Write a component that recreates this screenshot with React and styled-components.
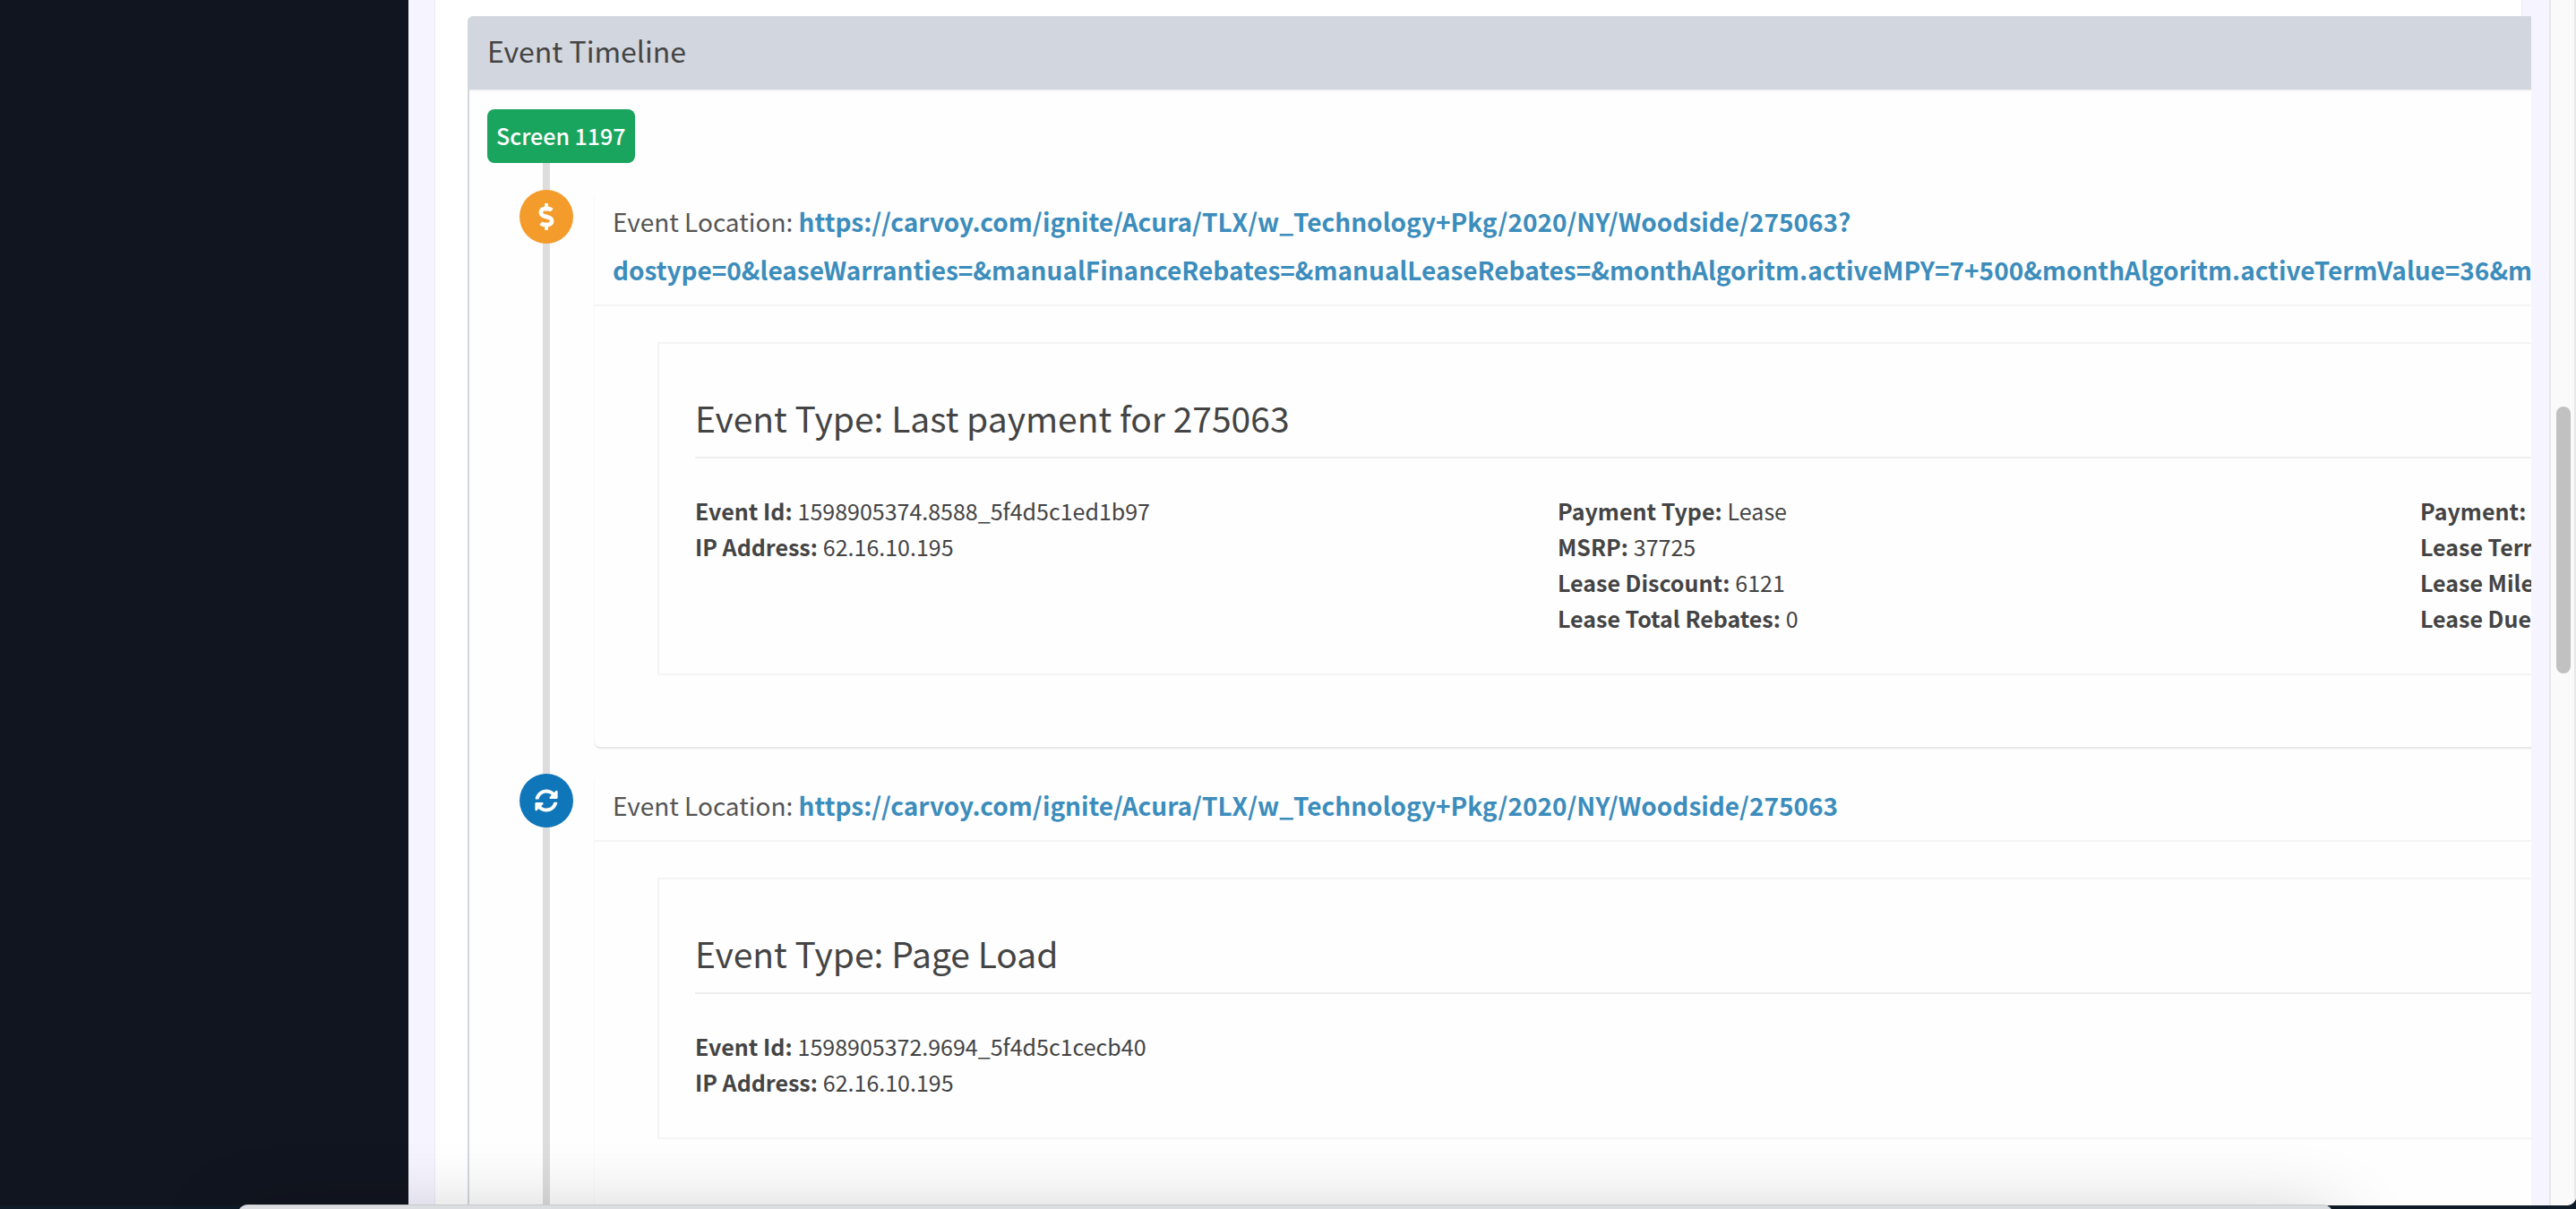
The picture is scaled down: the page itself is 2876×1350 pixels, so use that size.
import React from "react";
import styled, { createGlobalStyle } from "styled-components";
import { FaDollarSign, FaSyncAlt } from "react-icons/fa";

const GlobalStyle = createGlobalStyle`
  *, *::before, *::after { box-sizing: border-box; }
  body {
    margin: 0;
    background: #0f1b28;
    color: #444;
    font-family: "Noto Sans CJK SC", "Source Sans Pro", sans-serif;
    font-size: 25px;
    line-height: 40px;
    overflow: hidden;
  }
`;

const Desktop = styled.div`
  position: relative;
  height: 100vh;
  padding-bottom: 4px;
  overflow: hidden;
`;

const BrowserWindow = styled.div`
  display: flex;
  height: 100%;
  overflow: hidden;
  border-radius: 0 0 10px 0;
  background: #f6f4ff;
`;

const Sidebar = styled.aside`
  flex: 0 0 456px;
  background: #11151f;
`;

const Content = styled.main`
  flex: 1 1 0;
  min-width: 0;
  padding: 0 10px 0 29px;
  margin-right: 20px;
  overflow: hidden;
`;

const Box = styled.div`
  min-height: 100%;
  padding: 18px 36px 0;
  background: #fff;
  border: solid #eceaf4;
  border-width: 0 1px;
`;

const Panel = styled.section`
  width: max-content;
  border: 2px solid #d2d6de;
  border-radius: 6px;
  background: #fefefe;
`;

const PanelHeader = styled.header`
  padding: 16px 20px 24px;
  background: #d2d6de;
  border-bottom: 2px solid #f4f4f4;
`;

const PanelTitle = styled.h2`
  margin: 0;
  font-size: 32px;
  font-weight: 400;
  line-height: 40px;
`;

const TimelineList = styled.ul`
  position: relative;
  display: flex;
  flex-direction: column;
  gap: 30px;
  margin: 0;
  padding: 20px;
  list-style: none;

  &::before {
    content: "";
    position: absolute;
    top: 20px;
    bottom: 0;
    left: 82px;
    width: 8px;
    background: #ddd;
  }
`;

const TimelineRow = styled.li`
  position: relative;
  display: flex;
  align-items: flex-start;
  gap: 24px;
  padding-left: ${(p) => (p.$label ? 0 : 36)}px;
`;

const ScreenLabel = styled.span`
  padding: 9px 10px 11px;
  border-radius: 8px;
  background: #1aa55e;
  color: #fff;
  font-weight: 500;
`;

const Marker = styled.span`
  display: flex;
  flex: 0 0 60px;
  align-items: center;
  justify-content: center;
  height: 60px;
  border-radius: 50%;
  background: ${(p) => p.$color};
  color: #fff;
  font-size: ${(p) => p.$size}px;
`;

const EventCard = styled.article`
  padding-bottom: 60px;
  border-radius: 6px;
  background: #fefefe;
  box-shadow: 0 2px 2px rgba(0, 0, 0, 0.1);
`;

const EventHeader = styled.h3`
  margin: 0;
  padding: 8px 20px 12px;
  border-bottom: 2px solid #f4f4f4;
  color: #555;
  font-size: 28px;
  font-weight: 400;
  line-height: 54px;
  white-space: nowrap;
`;

const EventLink = styled.a`
  color: #3c8dbc;
  font-weight: 700;
  text-decoration: none;
`;

const EventBody = styled.div`
  margin: 40px 70px 20px;
  padding: 40px;
  border: 2px solid #f4f4f4;
`;

const EventType = styled.h4`
  margin: 0 0 38px;
  padding: 18px 0 20px;
  border-bottom: 2px solid #eee;
  font-size: 39px;
  font-weight: 400;
  line-height: 48px;
`;

const Columns = styled.div`
  display: grid;
  grid-template-columns: repeat(3, 963px);
  padding-bottom: 2px;
`;

const Facts = styled.dl`
  margin: 0;
`;

const Fact = styled.div`
  display: flex;
  gap: 6px;

  dt { font-weight: 700; }
  dd { margin: 0; }
`;

const ScrollTrack = styled.div`
  flex: 0 0 30px;
  padding: 454px 4px 0 6px;
  background: #fafafa;
  border: solid #e8e8e8;
  border-width: 0 2px;
`;

const ScrollThumb = styled.div`
  width: 16px;
  height: 298px;
  border-radius: 8px;
  background: #c1c1c1;
`;

const FrontWindow = styled.div`
  position: absolute;
  top: calc(100% - 5px);
  left: 266px;
  right: 272px;
  height: 60px;
  border-top: 1px solid #c9cacc;
  border-radius: 10px;
  background: #dcdde0;
  box-shadow: 0 26px 90px rgba(0, 0, 0, 0.3);
`;

const events = [
  {
    color: "#f39c2b",
    icon: FaDollarSign,
    iconSize: 30,
    link: [
      "https://carvoy.com/ignite/Acura/TLX/w_Technology+Pkg/2020/NY/Woodside/275063?",
      "dostype=0&leaseWarranties=&manualFinanceRebates=&manualLeaseRebates=&monthAlgoritm.activeMPY=7+500&monthAlgoritm.activeTermValue=36&monthAlgoritm",
    ],
    type: "Last payment for 275063",
    columns: [
      [["Event Id:", "1598905374.8588_5f4d5c1ed1b97"], ["IP Address:", "62.16.10.195"]],
      [
        ["Payment Type:", "Lease"],
        ["MSRP:", "37725"],
        ["Lease Discount:", "6121"],
        ["Lease Total Rebates:", "0"],
      ],
      [["Payment:"], ["Lease Term:"], ["Lease Mileage:"], ["Lease Due:"]],
    ],
  },
  {
    color: "#0f76b9",
    icon: FaSyncAlt,
    iconSize: 26,
    link: ["https://carvoy.com/ignite/Acura/TLX/w_Technology+Pkg/2020/NY/Woodside/275063"],
    type: "Page Load",
    columns: [
      [["Event Id:", "1598905372.9694_5f4d5c1cecb40"], ["IP Address:", "62.16.10.195"]],
    ],
  },
];

function TimelineEvent({ event }) {
  const Icon = event.icon;
  return (
    <TimelineRow>
      <Marker $color={event.color} $size={event.iconSize}>
        <Icon />
      </Marker>
      <EventCard>
        <EventHeader>
          Event Location:{" "}
          <EventLink href={event.link.join("")}>
            {event.link.map((part, i) => (
              <React.Fragment key={part}>
                {i > 0 && <br />}
                {part}
              </React.Fragment>
            ))}
          </EventLink>
        </EventHeader>
        <EventBody>
          <EventType>Event Type: {event.type}</EventType>
          <Columns>
            {event.columns.map((facts, i) => (
              <Facts key={i}>
                {facts.map(([name, value]) => (
                  <Fact key={name}>
                    <dt>{name}</dt>
                    {value && <dd>{value}</dd>}
                  </Fact>
                ))}
              </Facts>
            ))}
          </Columns>
        </EventBody>
      </EventCard>
    </TimelineRow>
  );
}

export default function App() {
  return (
    <Desktop>
      <GlobalStyle />
      <BrowserWindow>
        <Sidebar />
        <Content>
          <Box>
            <Panel>
              <PanelHeader>
                <PanelTitle>Event Timeline</PanelTitle>
              </PanelHeader>
              <TimelineList>
                <TimelineRow $label>
                  <ScreenLabel>Screen 1197</ScreenLabel>
                </TimelineRow>
                {events.map((event) => (
                  <TimelineEvent key={event.type} event={event} />
                ))}
              </TimelineList>
            </Panel>
          </Box>
        </Content>
        <ScrollTrack>
          <ScrollThumb />
        </ScrollTrack>
      </BrowserWindow>
      <FrontWindow />
    </Desktop>
  );
}
